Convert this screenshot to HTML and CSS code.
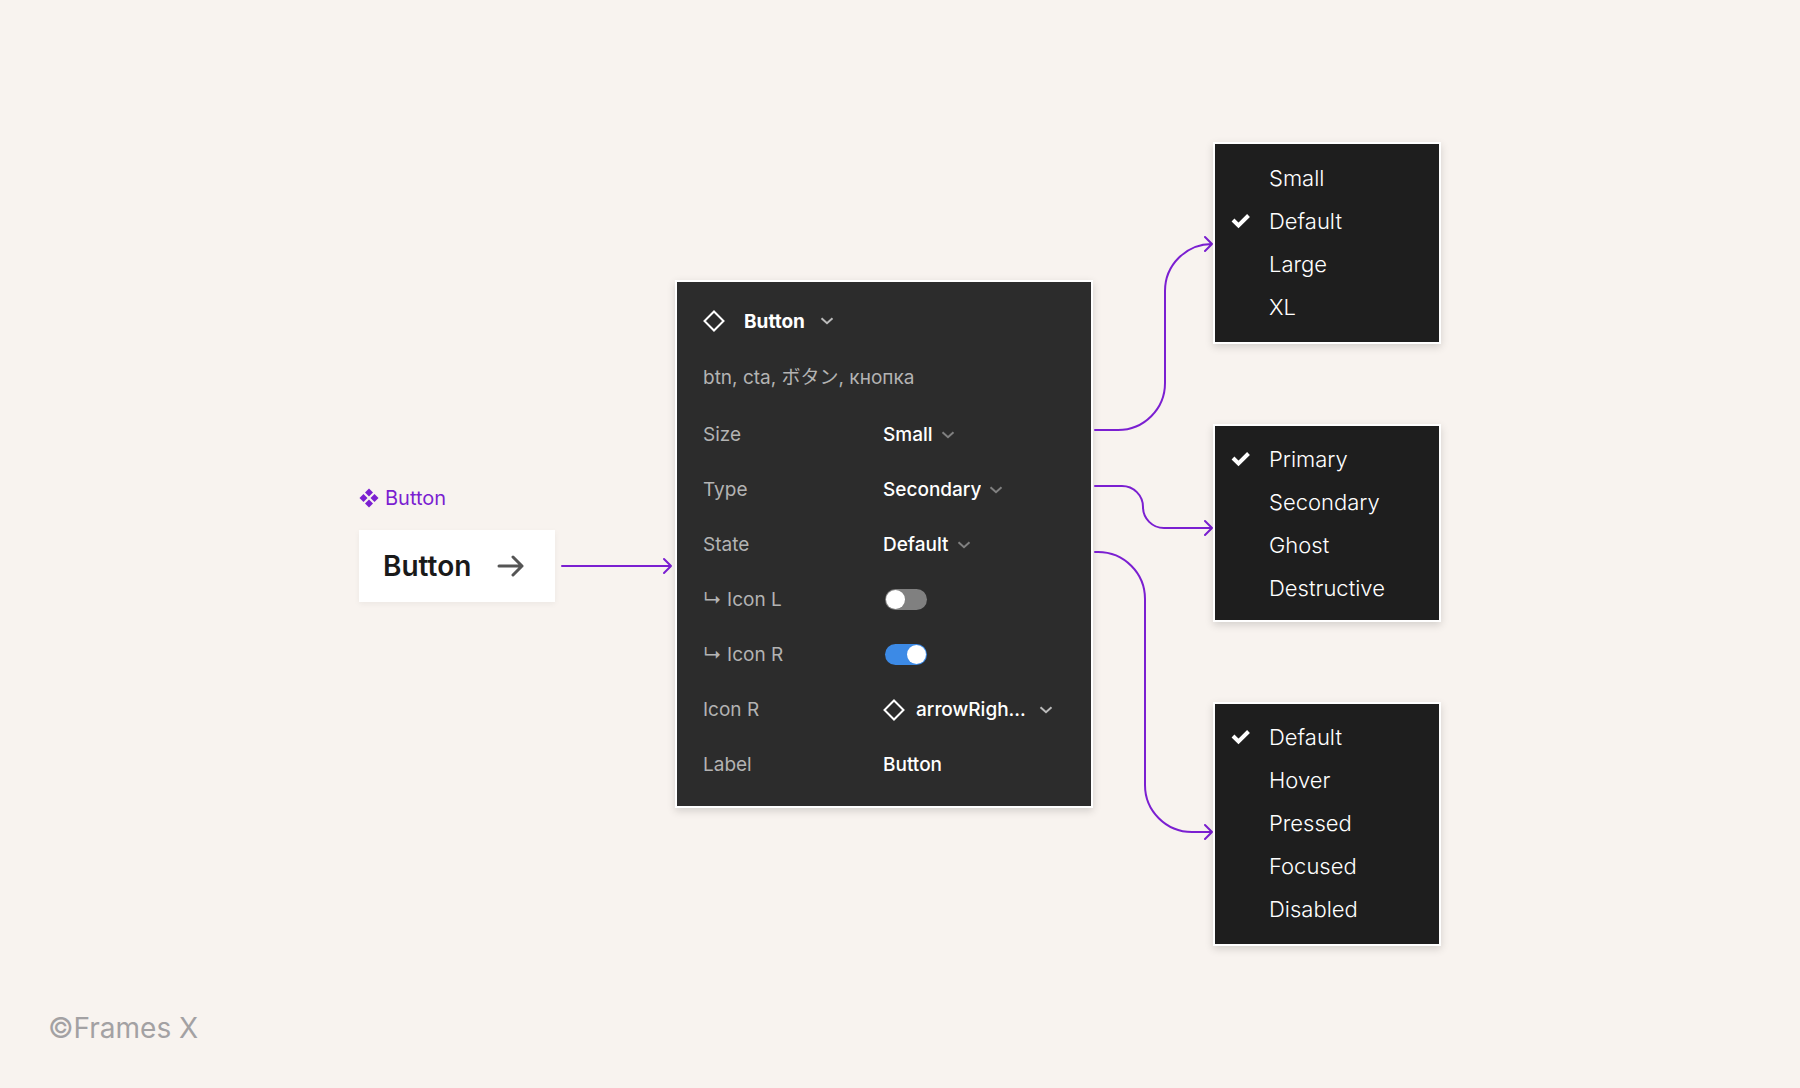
FILE: index.html
```html
<!DOCTYPE html>
<html lang="en">
    <head>
        <meta charset="UTF-8">
        <meta name="viewport" content="width=device-width, initial-scale=1.0">
        <title>Button component</title>
        <link rel="stylesheet" href="styles.css">
    </head>
<body>
    <main class="diagram">
        <div class="component">
            <div class="component-name">
                <svg width="20" height="20" viewBox="0 0 20 20" fill="currentColor">
                    <path d="M10 0.5l4 4-4 4-4-4zM10 11.5l4 4-4 4-4-4zM4.5 6l4 4-4 4-4-4zM15.5 6l4 4-4 4-4-4z"/>
                </svg>
                <span>Button</span>
            </div>
            <button class="sample" type="button">
                Button
                <svg width="28" height="24" viewBox="0 0 28 24" fill="none" stroke="#555" stroke-width="3" stroke-linecap="round" stroke-linejoin="round">
                    <path d="M2 12h23M16 3l9 9-9 9"/>
                </svg>
            </button>
        </div>

        <svg class="lines" width="120" height="116" viewBox="0 0 120 116">
            <path d="M7 80H116M109 73l7 7-7 7"/>
        </svg>

        <form class="panel">
            <div class="panel-header">
                <svg class="diamond" width="22" height="22" viewBox="0 0 22 22"><path d="M11 1.5l9.5 9.5-9.5 9.5L1.5 11z"/></svg>
                <button class="title" type="button">
                    Button
                    <svg width="14" height="8" viewBox="0 0 14 8"><path d="M1.5 1.2l5.5 5 5.5-5"/></svg>
                </button>
            </div>
            <p class="keywords">btn, cta, ボタン, кнопка</p>

            <div class="row">
                <label for="size">Size</label>
                <select id="size">
                    <option selected>Small</option>
                    <option>Default</option>
                    <option>Large</option>
                    <option>XL</option>
                </select>
            </div>
            <div class="row">
                <label for="type">Type</label>
                <select id="type">
                    <option>Primary</option>
                    <option selected>Secondary</option>
                    <option>Ghost</option>
                    <option>Destructive</option>
                </select>
            </div>
            <div class="row">
                <label for="state">State</label>
                <select id="state">
                    <option selected>Default</option>
                    <option>Hover</option>
                    <option>Pressed</option>
                    <option>Focused</option>
                    <option>Disabled</option>
                </select>
            </div>
            <div class="row">
                <label for="showIconL">↳ Icon L</label>
                <input type="checkbox" id="showIconL">
            </div>
            <div class="row">
                <label for="showIconR">↳ Icon R</label>
                <input type="checkbox" id="showIconR" checked>
            </div>
            <div class="row">
                <label for="iconR">Icon R</label>
                <div class="instance">
                    <svg class="diamond" width="22" height="22" viewBox="0 0 22 22"><path d="M11 1.5l9.5 9.5-9.5 9.5L1.5 11z"/></svg>
                    <select id="iconR">
                        <option>arrowRigh...</option>
                    </select>
                </div>
            </div>
            <div class="row">
                <label for="labelText">Label</label>
                <input type="text" id="labelText" value="Button">
            </div>
        </form>

        <svg class="lines" width="120" height="804" viewBox="0 0 120 804">
            <path d="M2 288H25A47 47 0 0 0 72 241V149A47 47 0 0 1 119 102M112 95l7 7-7 7"/>
            <path d="M2 344H29A21 21 0 0 1 50 365A21 21 0 0 0 71 386H119M112 379l7 7-7 7"/>
            <path d="M2 410H5A47 47 0 0 1 52 457V643A47 47 0 0 0 99 690H119M112 683l7 7-7 7"/>
        </svg>

        <div class="menus">
            <div class="menu menu-size" role="menu" aria-label="Size">
                <button type="button" role="menuitemradio">Small</button>
                <button type="button" role="menuitemradio" aria-checked="true"><svg width="20" height="16" viewBox="0 0 20 16"><path d="M2 7l5.5 5.5L17.5 2.5"/></svg>Default</button>
                <button type="button" role="menuitemradio">Large</button>
                <button type="button" role="menuitemradio">XL</button>
            </div>
            <div class="menu menu-type" role="menu" aria-label="Type">
                <button type="button" role="menuitemradio" aria-checked="true"><svg width="20" height="16" viewBox="0 0 20 16"><path d="M2 7l5.5 5.5L17.5 2.5"/></svg>Primary</button>
                <button type="button" role="menuitemradio">Secondary</button>
                <button type="button" role="menuitemradio">Ghost</button>
                <button type="button" role="menuitemradio">Destructive</button>
            </div>
            <div class="menu menu-state" role="menu" aria-label="State">
                <button type="button" role="menuitemradio" aria-checked="true"><svg width="20" height="16" viewBox="0 0 20 16"><path d="M2 7l5.5 5.5L17.5 2.5"/></svg>Default</button>
                <button type="button" role="menuitemradio">Hover</button>
                <button type="button" role="menuitemradio">Pressed</button>
                <button type="button" role="menuitemradio">Focused</button>
                <button type="button" role="menuitemradio">Disabled</button>
            </div>
        </div>
    </main>

    <footer>©Frames X</footer>
</body>
</html>
```
FILE: styles.css
```css
* {
    box-sizing: border-box;
}
body {
    margin: 0;
    min-height: 100vh;
    display: grid;
    grid-template-rows: 1fr auto 1fr;
    background-color: #f8f3ef;
    font-family: Inter, "Noto Sans CJK JP", sans-serif;
}
button, input, select {
    font: inherit;
    color: inherit;
    margin: 0;
    padding: 0;
    border: none;
    background: none;
}
button, select {
    cursor: pointer;
}
.diagram {
    grid-row: 2;
    display: flex;
    justify-content: center;
    align-items: center;
}
.diagram > * {
    flex-shrink: 0;
}

/* component on the left */
.component {
    display: flex;
    flex-direction: column;
    gap: 20px;
}
.component-name {
    display: flex;
    align-items: center;
    gap: 6px;
    color: #7b1fd1;
    font-size: 20px;
    line-height: 24px;
}
.sample {
    display: flex;
    align-items: center;
    justify-content: space-between;
    width: 196px;
    height: 72px;
    padding: 0 30px 0 24px;
    background-color: #fff;
    color: #1a1a1a;
    font-size: 28px;
    font-weight: 600;
    box-shadow: 0 2px 6px rgba(0, 0, 0, 0.05);
}

/* connectors */
.lines {
    fill: none;
    stroke: #7b1fd1;
    stroke-width: 2;
    stroke-linecap: round;
    stroke-linejoin: round;
}

/* properties panel */
.panel {
    width: 418px;
    padding: 11px 26px 14px;
    border: 2px solid #fff;
    background-color: #2c2c2c;
    color: #fff;
    font-size: 19px;
    font-weight: 500;
    box-shadow: 0 3px 8px rgba(0, 0, 0, 0.15);
}
.panel-header {
    display: flex;
    align-items: center;
    gap: 19px;
    height: 56px;
}
.title {
    display: flex;
    align-items: center;
    gap: 15px;
    font-weight: 700;
}
.title svg {
    fill: none;
    stroke: #bbb;
    stroke-width: 2;
}
.diamond {
    fill: none;
    stroke: #fff;
    stroke-width: 2;
}
.keywords {
    margin: 0;
    line-height: 58px;
    color: #b3b3b3;
    font-weight: 400;
}
.row {
    display: grid;
    grid-template-columns: 180px 1fr;
    align-items: center;
    height: 55px;
}
.row label {
    color: #b3b3b3;
    font-weight: 400;
}
select {
    appearance: none;
    field-sizing: content;
    justify-self: start;
    padding-right: 22px;
    background: url("data:image/svg+xml,%3Csvg xmlns='http://www.w3.org/2000/svg' width='14' height='8' fill='none' stroke='%23808080' stroke-width='2'%3E%3Cpath d='M1.5 1.2l5.5 5 5.5-5'/%3E%3C/svg%3E") no-repeat right center;
}
.instance {
    display: flex;
    align-items: center;
    gap: 11px;
}
.instance select {
    padding-right: 27px;
    background-image: url("data:image/svg+xml,%3Csvg xmlns='http://www.w3.org/2000/svg' width='14' height='8' fill='none' stroke='%23bbbbbb' stroke-width='2'%3E%3Cpath d='M1.5 1.2l5.5 5 5.5-5'/%3E%3C/svg%3E");
}
input[type="text"] {
    width: 100%;
}
input[type="checkbox"] {
    appearance: none;
    display: flex;
    width: 42px;
    height: 21px;
    margin-left: 2px;
    padding: 1px;
    border-radius: 11px;
    background-color: #808080;
}
input[type="checkbox"]::before {
    content: "";
    width: 19px;
    height: 19px;
    border-radius: 50%;
    background-color: #fff;
}
input[type="checkbox"]:checked {
    justify-content: flex-end;
    background-color: #3c8ae6;
}

/* variant menus */
.menus {
    display: flex;
    flex-direction: column;
    gap: 80px;
}
.menu {
    width: 228px;
    border: 2px solid #fff;
    background-color: #1e1e1e;
    color: #fff;
    font-size: 22px;
    font-weight: 300;
    box-shadow: 0 3px 8px rgba(0, 0, 0, 0.15);
}
.menu-size {
    padding: 12px 0 14px;
}
.menu-type {
    padding: 11px 0;
}
.menu-state {
    padding: 11px 0 14px;
}
.menu button {
    display: flex;
    align-items: center;
    width: 100%;
    height: 43px;
    padding-left: 54px;
}
.menu svg {
    margin-left: -38px;
    margin-right: 18px;
    fill: none;
    stroke: #fff;
    stroke-width: 4;
}

footer {
    grid-row: 3;
    align-self: end;
    padding: 0 48px 40px;
    color: #a3a1a3;
    font-size: 28px;
    line-height: 40px;
}
```
